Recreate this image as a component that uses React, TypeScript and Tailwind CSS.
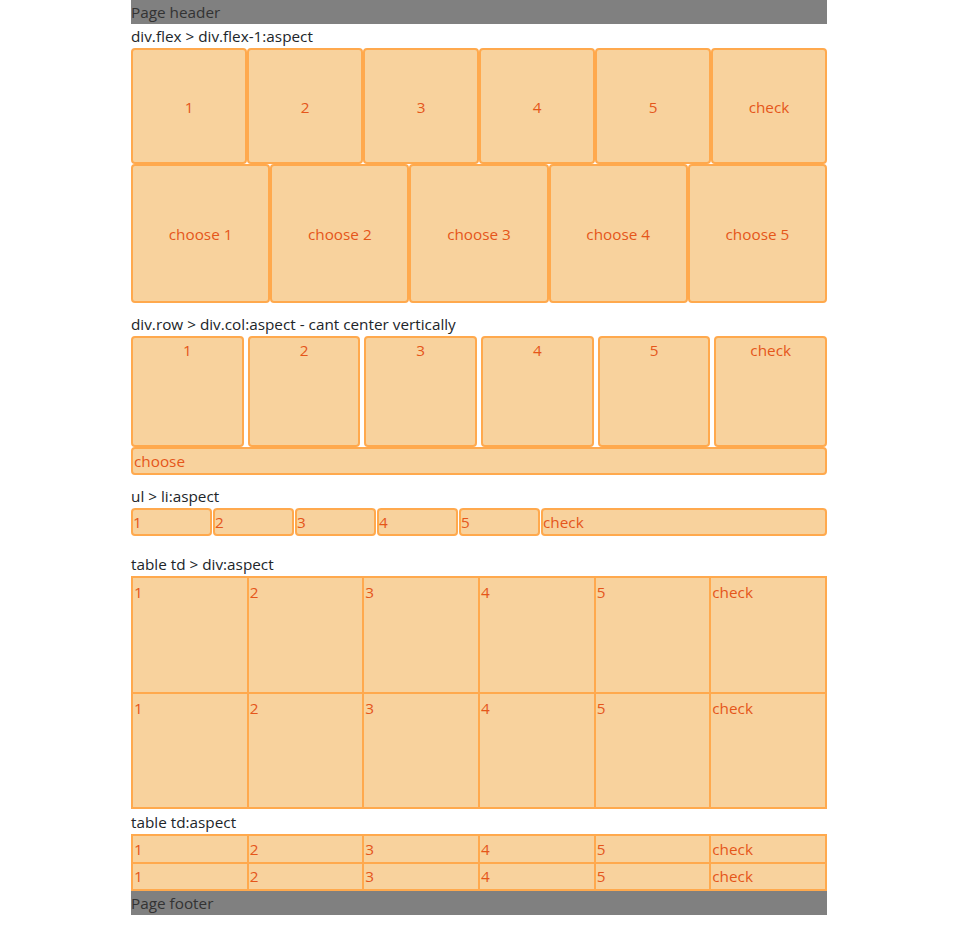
import React from "react";

const box = "border-2 border-[#ffa94d] bg-[#f8d29d] text-[#e5561a] rounded-[4px]";
const nums = ["1", "2", "3", "4", "5", "check"];

export default function App() {
  return (
    <div className="min-h-screen bg-white" style={{ fontFamily: '"Open Sans", "Noto Sans", sans-serif' }}>
      <div className="mx-auto w-[696px] text-[15.3px] leading-[24px] text-[#212529]">
        <div className="h-[24px] bg-[#808080] pt-[1px] leading-[23px] text-[#333]">Page header</div>

        <div className="pt-[1px] leading-[23px]">div.flex &gt; div.flex-1:aspect</div>
        <div className="flex">
          {nums.map((n) => (
            <div key={n} className={`${box} flex h-[116px] flex-1 items-center justify-center pt-[2px]`}>
              {n}
            </div>
          ))}
        </div>
        <div className="flex">
          {[1, 2, 3, 4, 5].map((n) => (
            <div key={n} className={`${box} flex h-[139px] flex-1 items-center justify-center`}>
              choose {n}
            </div>
          ))}
        </div>

        <div className="mt-[9px] pt-[1px] leading-[23px]">div.row &gt; div.col:aspect - cant center vertically</div>
        <div className="flex gap-[4px]">
          {nums.map((n) => (
            <div key={n} className={`${box} h-[111px] flex-1 pt-[1px] text-center leading-[23px]`}>
              {n}
            </div>
          ))}
        </div>
        <div className={`${box} h-[28px] px-[1px] pt-[1px] leading-[23px]`}>choose</div>

        <div className="mt-[9px] pt-[1px] leading-[23px]">ul &gt; li:aspect</div>
        <ul className="flex gap-[1px]">
          {nums.map((n) => (
            <li key={n} className={`${box} h-[28px] pt-[1px] leading-[23px] ${n === "check" ? "flex-1" : "w-[81px]"}`}>
              {n}
            </li>
          ))}
        </ul>

        <div className="mt-[16px] pt-[1px] leading-[23px]">table td &gt; div:aspect</div>
        <table className="w-full table-fixed border-collapse">
          <tbody>
            {[0, 1].map((r) => (
              <tr key={r}>
                {nums.map((n) => (
                  <td key={n} className="h-[115.5px] border-2 border-[#ffa94d] bg-[#f8d29d] p-0 align-top text-[#e5561a]">
                    <div className="h-full px-[1px] pt-[2px]">{n}</div>
                  </td>
                ))}
              </tr>
            ))}
          </tbody>
        </table>

        <div className="mt-[1px] pt-[1px] leading-[23px]">table td:aspect</div>
        <table className="w-full table-fixed border-collapse">
          <tbody>
            {[0, 1].map((r) => (
              <tr key={r}>
                {nums.map((n) => (
                  <td key={n} className="h-[27.5px] border-2 border-[#ffa94d] bg-[#f8d29d] p-0 px-[1px] pt-[1px] align-middle leading-[23px] text-[#e5561a]">
                    {n}
                  </td>
                ))}
              </tr>
            ))}
          </tbody>
        </table>

        <div className="h-[24px] bg-[#808080] pt-[1px] leading-[23px] text-[#333]">Page footer</div>
      </div>
    </div>
  );
}
